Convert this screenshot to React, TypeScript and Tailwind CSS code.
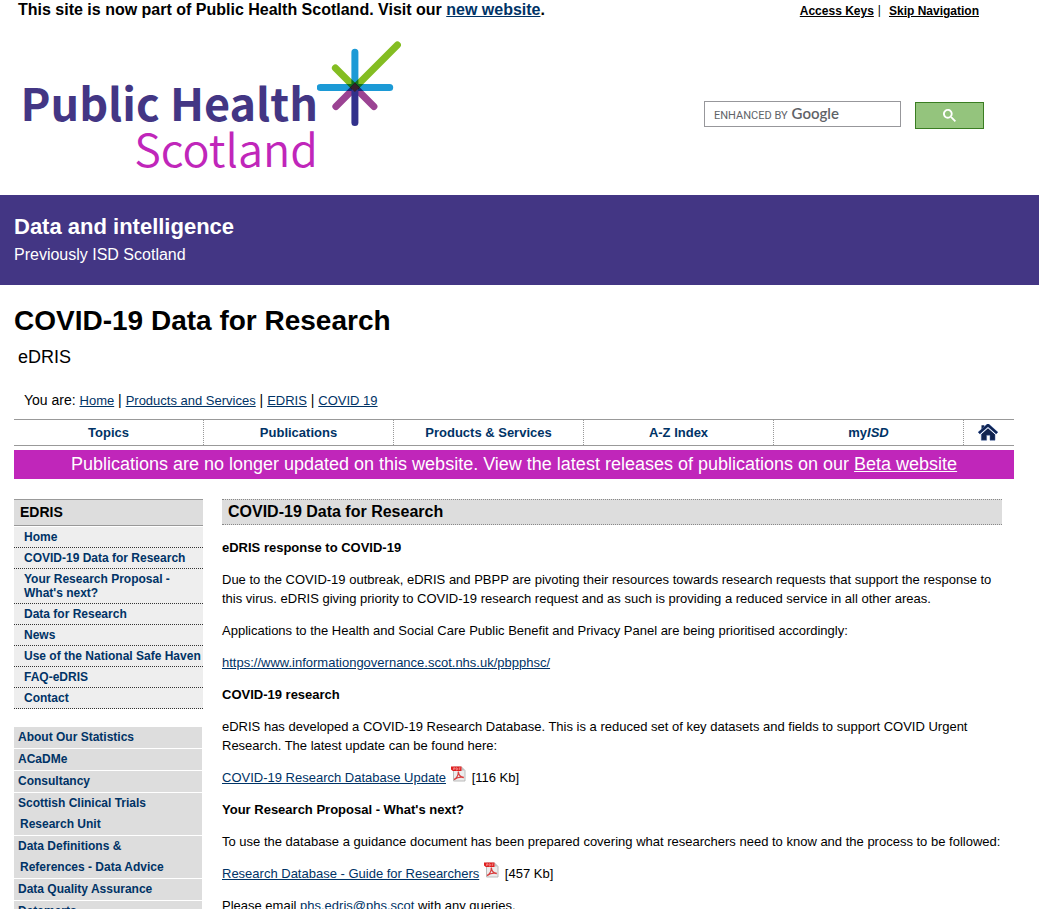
import React from "react";

const navItems: React.ReactNode[] = [
  "Topics",
  "Publications",
  "Products & Services",
  "A-Z Index",
  <>
    my<em>ISD</em>
  </>,
];

const edrisLinks = [
  "Home",
  "COVID-19 Data for Research",
  "Your Research Proposal - What's next?",
  "Data for Research",
  "News",
  "Use of the National Safe Haven",
  "FAQ-eDRIS",
  "Contact",
];

const siteLinks: string[][] = [
  ["About Our Statistics"],
  ["ACaDMe"],
  ["Consultancy"],
  ["Scottish Clinical Trials", "Research Unit"],
  ["Data Definitions &", "References - Data Advice"],
  ["Data Quality Assurance"],
  ["Datamarts"],
];

const crumbs = ["Home", "Products and Services", "EDRIS", "COVID 19"];

function Link({ children }: { children: React.ReactNode }) {
  return (
    <a href="#" className="text-[#003366] underline">
      {children}
    </a>
  );
}

function Star() {
  return (
    <svg
      viewBox="0.6 0.5 84 86"
      className="absolute top-0 right-0 isolate h-[86px] w-[84px]"
      fill="none"
      strokeWidth="7"
      strokeLinecap="round"
      aria-hidden="true"
    >
      <path className="mix-blend-multiply" d="M38.5 11.8V45M3.8 47H73.3" stroke="#1c9ad6" />
      <path className="mix-blend-multiply" d="M19 27.5L38.5 47L81 4.5" stroke="#84bd22" />
      <path className="mix-blend-multiply" d="M19.5 66L38.5 47L57.5 66" stroke="#9b4393" />
      <path d="M38.5 51V82" stroke="#32318b" />
      <path d="M38.5 42.5L43 47L38.5 51.5L34 47Z" fill="#37202c" />
    </svg>
  );
}

function HouseIcon() {
  return (
    <svg viewBox="0 0 20 17" className="h-[17px] w-5" aria-hidden="true">
      <path d="M3.5 1.2H6.3V4L3.5 6.6Z" fill="#10234f" />
      <path d="M10 3.6L17 10V16.2H12V11.2H8.6V16.2H3.3V10Z" fill="#10234f" stroke="#3f5f9f" strokeWidth="0.5" />
      <path d="M1 9.3L10 1.3L19 9.3" fill="none" stroke="#4d70b8" strokeWidth="3.4" />
      <path d="M1 9L10 1.1L19 9" fill="none" stroke="#10234f" strokeWidth="2.2" />
      <path d="M2.2 10.6L10 3.7L17.8 10.6" fill="none" stroke="#ffffff" strokeWidth="1" />
    </svg>
  );
}

function PdfIcon() {
  return (
    <svg
      viewBox="0 0 16 16"
      className="-mt-2 mr-[2px] ml-1 inline-block h-4 w-4 align-baseline"
      aria-label="PDF"
      role="img"
    >
      <path d="M3.5 1H11.5L15 4.5V15H3.5Z" fill="#ececec" stroke="#b4b4b4" strokeWidth="0.9" />
      <path d="M11.5 1L15 4.5H11.5Z" fill="#bdbdbd" />
      <path d="M1 0.5H11.5V5H2.8L1 3.5Z" fill="#df1f1f" />
      <path d="M3.6 4V1.8H5V3H3.6M6.2 1.8V4H7L7.8 3L7 1.8ZM9.2 4V1.8H10.5M9.2 3H10.3" fill="none" stroke="#ffc4c4" strokeWidth="0.5" />
      <path d="M4 13.6C6.6 12 8.5 8.8 8.3 5.6C8.6 9 10.4 11.2 13.8 11.5C10.4 10.6 7 11.5 4 13.6Z" fill="none" stroke="#d84040" strokeWidth="1.3" />
    </svg>
  );
}

export default function App() {
  return (
    <div className="bg-white font-['Liberation_Sans',Arial,sans-serif] text-black">
      <header>
        <div className="flex h-5 items-start justify-between pr-[60px] pl-[18px]">
          <p className="text-base leading-5 font-bold">
            This site is now part of Public Health Scotland. Visit our <Link>new website</Link>.
          </p>
          <nav aria-label="Accessibility" className="flex items-start text-xs leading-[22px]">
            <a href="#" className="font-bold underline">
              Access Keys
            </a>
            <span className="mr-2 ml-1 leading-5">|</span>
            <a href="#" className="font-bold underline">
              Skip Navigation
            </a>
          </nav>
        </div>
        <div className="flex items-start justify-between pr-[55px] pl-6">
          <a
            href="#"
            aria-label="Public Health Scotland"
            className="relative mt-[21px] block h-[154px] w-[377px] font-['Noto_Sans_CJK_SC',sans-serif] whitespace-nowrap"
          >
            <span className="mt-[37px] flex w-[294px] flex-col items-end">
              <span className="text-[45px] leading-[48px] font-bold text-[#433684]">
                Public Health
              </span>
              <span className="text-[45px] leading-[44px] font-[350] text-[#c026ba]">
                Scotland
              </span>
            </span>
            <Star />
          </a>
          <form className="mt-[81px] flex items-start gap-[14px]" onSubmit={(e) => e.preventDefault()}>
            <label className="relative block">
              <input
                type="text"
                aria-label="Search"
                className="block h-[26px] w-[197px] border border-[#97979b] px-2 text-sm outline-none"
              />
              <span className="pointer-events-none absolute inset-y-0 left-[10px] flex items-baseline gap-1 leading-6 text-[#5f6368]">
                <span className="font-[Roboto,sans-serif] text-[11px]">ENHANCED BY</span>
                <span className="font-[Lato,sans-serif] text-[15px] font-semibold">Google</span>
              </span>
            </label>
            <button
              type="submit"
              aria-label="Search"
              className="mt-px flex h-[27px] w-[69px] items-center justify-center border border-[#3a7d22] bg-[#94c47d]"
            >
              <svg viewBox="0 0 13 13" className="h-[13px] w-[13px]" aria-hidden="true">
                <path
                  fill="#fff"
                  d="m4.8495 7.8226c0.82666 0 1.5262-0.29146 2.0985-0.87438 0.57232-0.58292 0.86378-1.2877 0.87438-2.1144 0.010599-0.82666-0.28086-1.5262-0.87438-2.0985-0.59352-0.57232-1.293-0.86378-2.0985-0.87438-0.8055-0.010599-1.5103 0.28086-2.1144 0.87438-0.60414 0.59352-0.8956 1.293-0.87438 2.0985 0.021197 0.8055 0.31266 1.5103 0.87438 2.1144 0.56172 0.60414 1.2665 0.8956 2.1144 0.87438zm4.4695 0.2115 3.681 3.6819-1.259 1.284-3.6817-3.7 0.0019784-0.69479-0.090043-0.098846c-0.87973 0.76087-1.92 1.1413-3.1207 1.1413-1.3553 0-2.5025-0.46363-3.4417-1.3909s-1.4088-2.0686-1.4088-3.4239c0-1.3553 0.4696-2.4966 1.4088-3.4239 0.9392-0.92727 2.0864-1.3969 3.4417-1.4088 1.3553-0.011889 2.4906 0.45771 3.406 1.4088 0.9154 0.95107 1.379 2.0924 1.3909 3.4239 0 1.2126-0.38043 2.2588-1.1413 3.1385l0.098834 0.090049z"
                />
              </svg>
            </button>
          </form>
        </div>
      </header>

      <div className="bg-[#433684] px-[14px] pt-[18px] pb-4 text-white">
        <p className="text-[22px] leading-7 font-bold">Data and intelligence</p>
        <p className="text-base leading-7">Previously ISD Scotland</p>
      </div>

      <div className="pr-[25px] pl-[14px]">
        <h1 className="pt-[18px] text-[28px] leading-9 font-bold">COVID-19 Data for Research</h1>
        <p className="mt-[6px] pl-1 text-lg leading-6">eDRIS</p>
        <nav aria-label="Breadcrumb" className="mt-[21px] px-[10px] text-sm leading-5">
          You are:{" "}
          {crumbs.map((crumb, i) => (
            <React.Fragment key={crumb}>
              {i > 0 && " | "}
              <span className="text-[13px]">
                <Link>{crumb}</Link>
              </span>
            </React.Fragment>
          ))}
        </nav>

        <nav
          aria-label="Main"
          className="mt-2 flex border-y border-[#999] text-[13px] leading-[25px] font-bold text-[#003366]"
        >
          {navItems.map((item, i) => (
            <a
              key={i}
              href="#"
              className="flex-1 border-r border-dotted border-[#999] text-center"
            >
              {item}
            </a>
          ))}
          <a
            href="#"
            aria-label="Home"
            className="flex w-[50px] items-center justify-center pr-[2px]"
          >
            <HouseIcon />
          </a>
        </nav>
        <p className="mt-1 bg-[#c026ba] text-center text-lg leading-[29px] text-white">
          Publications are no longer updated on this website. View the latest releases of
          publications on our{" "}
          <a href="#" className="underline">
            Beta website
          </a>
        </p>

        <div className="mt-5 flex gap-[19px]">
          <aside className="w-[189px] shrink-0 font-bold text-[#003366]">
            <h2 className="border-y border-[#999] bg-[#ddd] px-[6px] text-sm leading-[25px] text-black">
              EDRIS
            </h2>
            <ul className="mt-px text-xs leading-[14px]">
              {edrisLinks.map((label) => (
                <li
                  key={label}
                  className="border-b border-dotted border-[#333] bg-[#eee] py-[3px] pl-[10px]"
                >
                  <a href="#">{label}</a>
                </li>
              ))}
            </ul>
            <ul className="mt-[18px] mr-px text-xs leading-[21px]">
              {siteLinks.map((lines) => (
                <li key={lines[0]} className="mb-px bg-[#ddd] pl-1">
                  <a href="#">
                    {lines.map((line, i) => (
                      <span key={line} className={i === 0 ? "block" : "block pl-[2px]"}>
                        {line}
                      </span>
                    ))}
                  </a>
                </li>
              ))}
            </ul>
          </aside>

          <main className="mr-3 flex min-w-0 flex-1 flex-col gap-[13px] text-[13px] leading-[19px]">
            <h2 className="border-y border-dotted border-[#888] bg-[#ddd] px-[6px] text-base leading-6 font-bold">
              COVID-19 Data for Research
            </h2>
            <h3 className="font-bold">eDRIS response to COVID-19</h3>
            <p>
              Due to the COVID-19 outbreak, eDRIS and PBPP are pivoting their resources towards
              research requests that support the response to this virus. eDRIS giving priority to
              COVID-19 research request and as such is providing a reduced service in all other
              areas.
            </p>
            <p>
              Applications to the Health and Social Care Public Benefit and Privacy Panel are being
              prioritised accordingly:
            </p>
            <p>
              <Link>https://www.informationgovernance.scot.nhs.uk/pbpphsc/</Link>
            </p>
            <h3 className="font-bold">COVID-19 research</h3>
            <p>
              eDRIS has developed a COVID-19 Research Database. This is a reduced set of key
              datasets and fields to support COVID Urgent Research. The latest update can be found
              here:
            </p>
            <p>
              <Link>COVID-19 Research Database Update</Link>
              <PdfIcon /> [116 Kb]
            </p>
            <h3 className="font-bold">Your Research Proposal - What's next?</h3>
            <p>
              To use the database a guidance document has been prepared covering what researchers
              need to know and the process to be followed:
            </p>
            <p>
              <Link>Research Database - Guide for Researchers</Link>
              <PdfIcon /> [457 Kb]
            </p>
            <p>
              Please email <Link>phs.edris@phs.scot</Link> with any queries.
            </p>
          </main>
        </div>
      </div>
    </div>
  );
}
